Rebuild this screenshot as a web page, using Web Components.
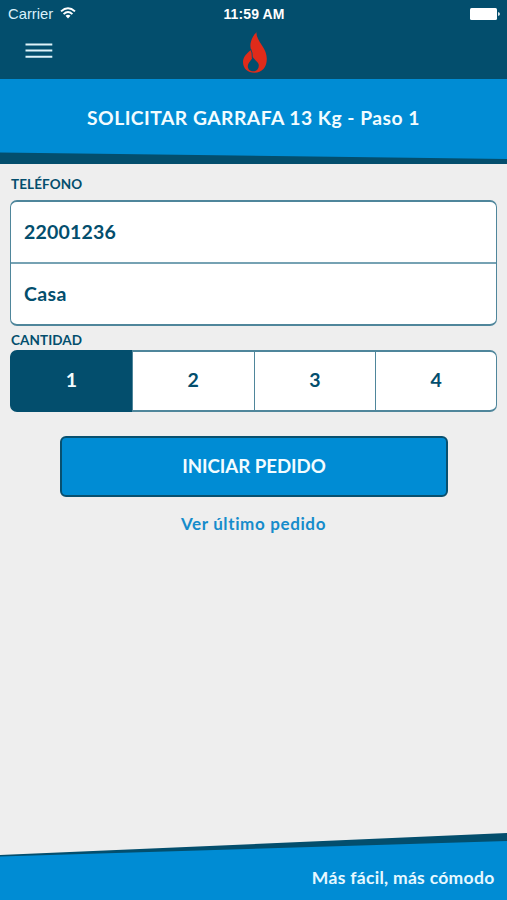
<!DOCTYPE html>
<html lang="es">
<head>
<meta charset="utf-8">
<meta name="viewport" content="width=device-width, initial-scale=1">
<title>Solicitar garrafa</title>
<style>
  html, body { height: 100%; }

  body {
    margin: 0;
    overflow: hidden;
    --navy: #034e6d;
    --blue: #008cd4;
    --line: #4f869b;
    --paper: #eeeeee;
    background: var(--paper);
    color: var(--navy);
    font-family: Lato, "Open Sans", sans-serif;
    font-weight: 700;
  }
</style>
</head>
<body>
<order-app></order-app>

<script>
class StatusBar extends HTMLElement {
  constructor() {
    super();
    this.attachShadow({ mode: 'open' });
  }

  connectedCallback() {
    this.shadowRoot.innerHTML = `
      <style>
        :host {
          display: grid;
          grid-template-columns: 1fr auto 1fr;
          align-items: center;
          height: 27px;
          padding: 0 7px 0 8px;
          color: #fff;
          font-family: "Liberation Sans", Arial, sans-serif;
          font-size: 14.8px;
          font-weight: 400;
        }

        .carrier {
          display: flex;
          align-items: center;
          gap: 7px;
          color: #d9f1fb;
        }

        .time {
          font-size: 14px;
          font-weight: 700;
          letter-spacing: .1px;
        }

        svg { display: block; }
        .carrier svg { margin-top: -2px; }
        .battery { justify-self: end; }
      </style>

      <div class="carrier">
        <span>Carrier</span>
        <svg width="16" height="12" viewBox="0 0 16 12" fill="none" stroke="#fff" stroke-width="1.9">
          <path d="M1 4.4Q8-2 15 4.4M3.6 7.1Q8 3 12.4 7.1"/>
          <path d="M5.5 8.8Q8 6.6 10.5 8.8L8 11.4Z" fill="#fff" stroke="none"/>
        </svg>
      </div>
      <span class="time">11:59 AM</span>
      <svg class="battery" width="30" height="12" viewBox="0 0 30 12" fill="#fff">
        <rect width="27" height="12" rx="1.5"/>
        <path d="M28 4Q30 4.300 30 6T28 8Z" opacity=".85"/>
      </svg>
    `;
  }
}

class NavBar extends HTMLElement {
  constructor() {
    super();
    this.attachShadow({ mode: 'open' });
  }

  connectedCallback() {
    this.shadowRoot.innerHTML = `
      <style>
        :host {
          display: grid;
          grid-template-columns: 1fr auto 1fr;
          height: 52px;
          padding: 0 25px;
        }

        .menu {
          justify-self: start;
          align-self: start;
          margin: 16px 0 0;
          padding: 0;
          border: 0;
          background: none;
        }

        svg { display: block; }
        .flame { margin: 5px 0 0 2px; }
      </style>

      <button class="menu" aria-label="Menú">
        <svg width="28" height="16" viewBox="0 0 28 16" stroke="#dff3fa" stroke-width="2">
          <path d="M.5 1.400H27.300M.5 7.600H27.300M.5 13.800H27.300"/>
        </svg>
      </button>
      <svg class="flame" width="26" height="42" viewBox="0 0 26 42">
        <path fill="#e02b1a" fill-rule="evenodd" d="M14.500 0C14 4 16.500 8 20 13.500C23 18 24.800 22 24.800 27C24.800 35.500 20 40.700 12.500 40.700C5.500 40.700 1 36.300 1 30C1 25.500 4 22.500 6.500 20C7.500 19 8.300 18.300 9.200 18C8.300 15.500 8 12.500 9 9.500C10 6 12 3 14.500 0ZM10.500 24.500C10 28.500 5.800 30.500 5.800 34.200C5.800 37.300 8.200 39.300 11.200 39.300C14.500 39.300 16.800 37 16.800 33.500C16.800 29.800 12.500 28.500 10.500 24.500Z"/>
        <path fill="none" stroke="var(--navy)" stroke-width=".9" d="M8.700 17Q10.600 20.500 10.300 26"/>
      </svg>
    `;
  }
}

class TitleBand extends HTMLElement {
  constructor() {
    super();
    this.attachShadow({ mode: 'open' });
  }

  connectedCallback() {
    this.shadowRoot.innerHTML = `
      <style>
        :host {
          display: block;
          height: 85px;
          background: var(--navy);
        }

        h1 {
          margin: 0;
          height: 80px;
          background: var(--blue);
          /* slanted lower edge */
          clip-path: polygon(0 0, 100% 0, 100% 100%, 0 73.500px);
          color: #f2fcff;
          font-size: 19.3px;
          font-weight: 700;
          line-height: 78px;
          text-align: center;
          letter-spacing: .48px;
        }
      </style>
      <h1><slot></slot></h1>
    `;
  }
}

class FieldGroup extends HTMLElement {
  constructor() {
    super();
    this.attachShadow({ mode: 'open' });
  }

  connectedCallback() {
    this.shadowRoot.innerHTML = `
      <style>
        :host { display: block; }

        .label {
          height: 20px;
          padding-left: 1px;
          font-size: 13.5px;
          line-height: 20px;
          letter-spacing: .1px;
        }
      </style>
      <div class="label">${this.getAttribute('label')}</div>
      <slot></slot>
    `;
  }
}

class ValueList extends HTMLElement {
  constructor() {
    super();
    this.attachShadow({ mode: 'open' });
  }

  connectedCallback() {
    this.shadowRoot.innerHTML = `
      <style>
        :host {
          display: block;
          box-sizing: border-box;
          height: 126px;
          border: solid var(--line);
          border-width: 2px 1px;
          border-radius: 7px;
          background: #fff;
        }

        ::slotted(div) {
          box-sizing: border-box;
          height: 61px;
          padding-left: 13px;
          font-size: 19.5px;
          line-height: 59px;
          letter-spacing: .4px;
        }

        ::slotted(div:first-child) {
          border-bottom: 2px solid #76a2b3;
          height: 62px;
          letter-spacing: .2px;
        }
      </style>
      <slot></slot>
    `;
  }
}

class QuantityPicker extends HTMLElement {
  constructor() {
    super();
    this.attachShadow({ mode: 'open' });
    this._value = 1;
  }

  connectedCallback() {
    this._value = parseInt(this.getAttribute('value')) || 1;
    this.render();
    this._setupEventListeners();
  }

  render() {
    const options = [1, 2, 3, 4].map((n) => `
      <button class="${n === this._value ? 'active' : ''}" data-value="${n}">${n}</button>
    `).join('');

    this.shadowRoot.innerHTML = `
      <style>
        :host {
          display: grid;
          grid-template-columns: repeat(4, 1fr);
          height: 62px;
        }

        button {
          margin: 0;
          padding: 0 0 3px;
          border: solid var(--line);
          border-width: 2px 0 2px 1px;
          border-radius: 0;
          background: #fff;
          color: var(--navy);
          font: inherit;
          font-size: 19.5px;
        }

        button:first-of-type { border-radius: 7px 0 0 7px; }

        button:last-of-type {
          border-right-width: 1px;
          border-radius: 0 7px 7px 0;
        }

        button.active {
          border-color: var(--navy);
          background: var(--navy);
          color: #f2fcff;
        }
      </style>
      ${options}
    `;
  }

  _setupEventListeners() {
    this.shadowRoot.querySelectorAll('button').forEach((btn) => {
      btn.addEventListener('click', () => {
        this._value = parseInt(btn.dataset.value);
        this.render();
        this._setupEventListeners();
      });
    });
  }
}

class PrimaryButton extends HTMLElement {
  constructor() {
    super();
    this.attachShadow({ mode: 'open' });
  }

  connectedCallback() {
    this.shadowRoot.innerHTML = `
      <style>
        :host { display: block; }

        button {
          display: block;
          box-sizing: border-box;
          width: 100%;
          height: 61px;
          padding: 0 0 2px;
          border: 2px solid #08506f;
          border-radius: 6px;
          background: var(--blue);
          color: #f2fcff;
          font: inherit;
          font-size: 18.7px;
          letter-spacing: -.05px;
        }
      </style>
      <button><slot></slot></button>
    `;
  }
}

class SloganFooter extends HTMLElement {
  constructor() {
    super();
    this.attachShadow({ mode: 'open' });
  }

  connectedCallback() {
    this.shadowRoot.innerHTML = `
      <style>
        :host {
          display: block;
          height: 67px;
          background: var(--navy);
          clip-path: polygon(0 22px, 100% 0, 100% 100%, 0 100%);
        }

        .slogan {
          box-sizing: border-box;
          height: 67px;
          padding: 22px 12.500px 0 0;
          background: var(--blue);
          clip-path: polygon(0 23.500px, 100% 8px, 100% 100%, 0 100%);
          color: #e6f8ff;
          font-size: 17.5px;
          line-height: 46px;
          text-align: right;
          letter-spacing: .3px;
        }
      </style>
      <div class="slogan"><slot></slot></div>
    `;
  }
}

class OrderApp extends HTMLElement {
  constructor() {
    super();
    this.attachShadow({ mode: 'open' });
  }

  connectedCallback() {
    this.shadowRoot.innerHTML = `
      <style>
        :host {
          display: flex;
          flex-direction: column;
          height: 100vh;
        }

        header { background: var(--navy); }

        main {
          flex: 1;
          padding: 10px 10px 0 10px;
        }

        value-list { margin-top: 6px; }

        .quantity { margin-top: 4px; }

        primary-button { margin: 24px 49px 0 50px; }

        .last-order {
          display: block;
          margin-top: 15px;
          color: #168ccb;
          font-size: 17px;
          line-height: 24px;
          text-align: center;
          text-decoration: none;
          letter-spacing: .63px;
        }
      </style>

      <header>
        <status-bar></status-bar>
        <nav-bar></nav-bar>
      </header>
      <title-band>SOLICITAR GARRAFA 13 Kg - Paso 1</title-band>
      <main>
        <field-group label="TELÉFONO">
          <value-list>
            <div>22001236</div>
            <div>Casa</div>
          </value-list>
        </field-group>
        <field-group class="quantity" label="CANTIDAD">
          <quantity-picker value="1"></quantity-picker>
        </field-group>
        <primary-button>INICIAR PEDIDO</primary-button>
        <a class="last-order" href="#">Ver último pedido</a>
      </main>
      <slogan-footer>Más fácil, más cómodo</slogan-footer>
    `;
  }
}

customElements.define('status-bar', StatusBar);
customElements.define('nav-bar', NavBar);
customElements.define('title-band', TitleBand);
customElements.define('field-group', FieldGroup);
customElements.define('value-list', ValueList);
customElements.define('quantity-picker', QuantityPicker);
customElements.define('primary-button', PrimaryButton);
customElements.define('slogan-footer', SloganFooter);
customElements.define('order-app', OrderApp);
</script>
</body>
</html>
